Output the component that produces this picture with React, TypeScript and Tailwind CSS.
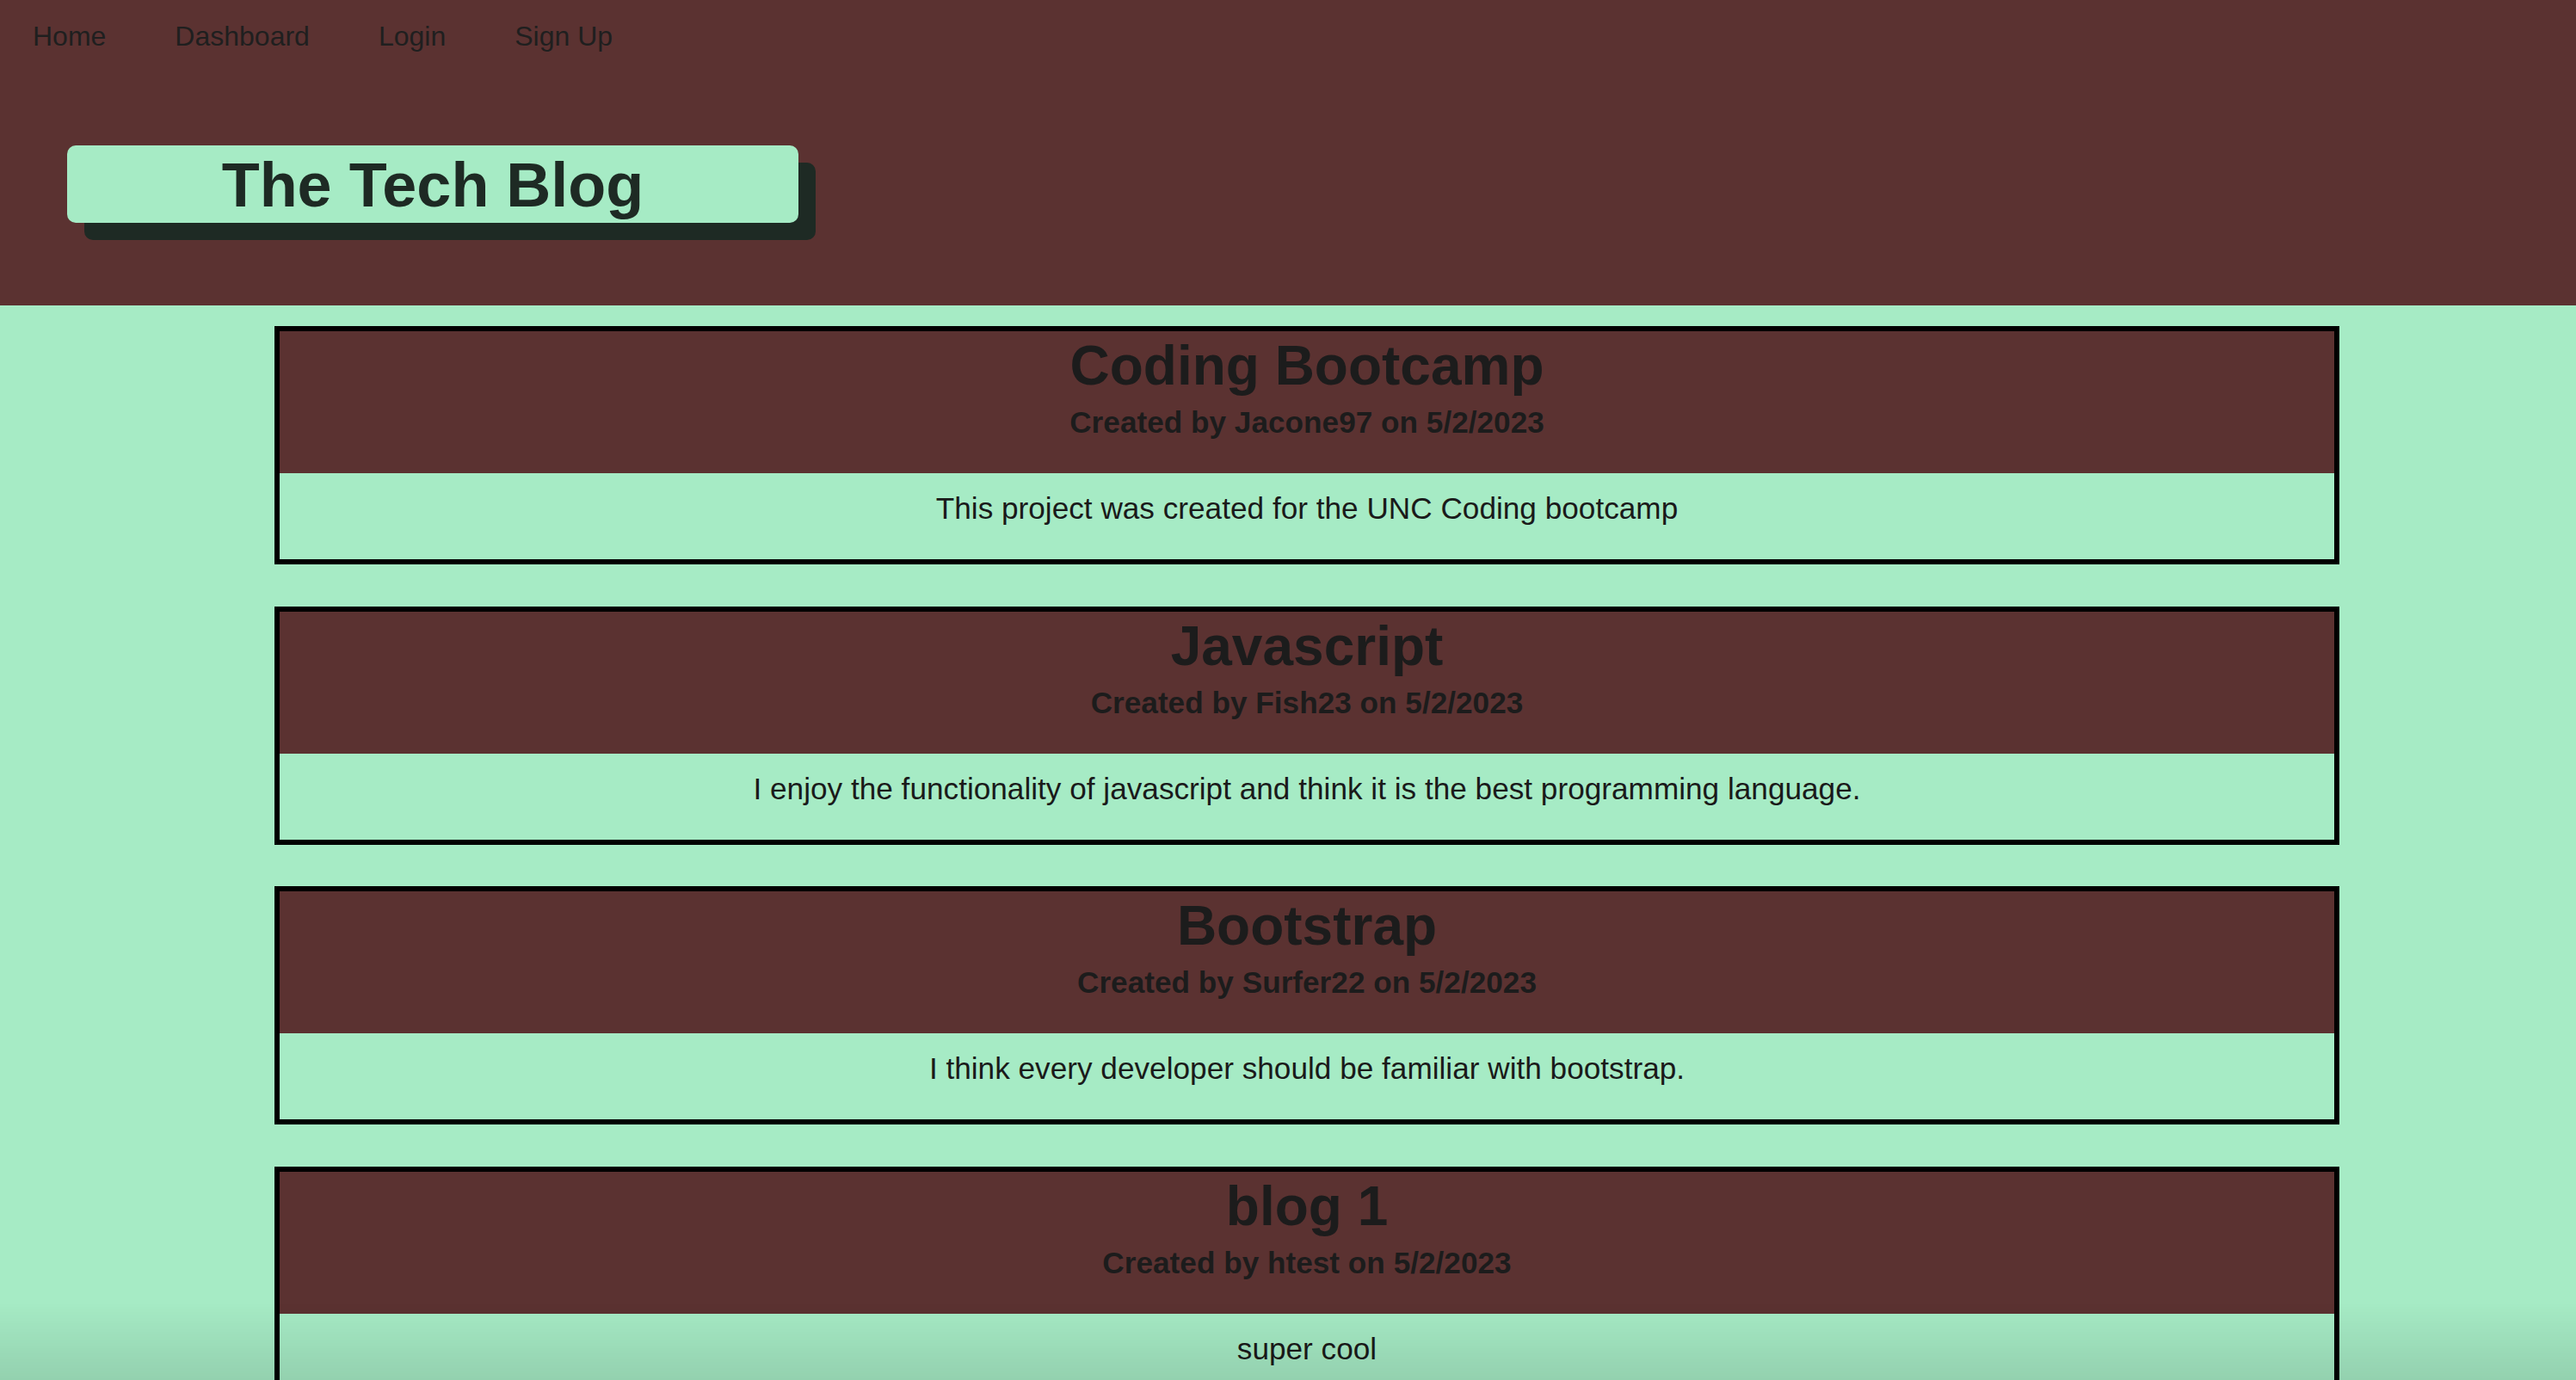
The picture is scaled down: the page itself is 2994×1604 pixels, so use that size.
import React from "react";

const posts = [
  {
    title: "Coding Bootcamp",
    author: "Jacone97",
    date: "5/2/2023",
    body: "This project was created for the UNC Coding bootcamp",
  },
  {
    title: "Javascript",
    author: "Fish23",
    date: "5/2/2023",
    body: "I enjoy the functionality of javascript and think it is the best programming language.",
  },
  {
    title: "Bootstrap",
    author: "Surfer22",
    date: "5/2/2023",
    body: "I think every developer should be familiar with bootstrap.",
  },
  {
    title: "blog 1",
    author: "htest",
    date: "5/2/2023",
    body: "super cool",
  },
];

export default function App() {
  return (
    <div className="min-h-screen bg-[#a6ebc5] font-['Liberation_Sans',Arial,sans-serif]">
      <header className="flex h-[355px] flex-col bg-[#5b3231]">
        <nav className="flex gap-[80px] pl-[38px] pt-[24px] text-[32px] leading-[36px] text-[#1f1f1f]">
          <a>Home</a>
          <a>Dashboard</a>
          <a>Login</a>
          <a>Sign Up</a>
        </nav>
        <div className="ml-[78px] mt-[109px] h-[90px] w-[850px] rounded-[10px] bg-[#a6ebc5] pt-[5px] text-center text-[72px] font-bold leading-[82px] text-[#1e2a24] shadow-[20px_20px_0_#1e2a24]">
          The Tech Blog
        </div>
      </header>
      <main className="flex flex-col gap-[48.7px] pb-[48px] pl-[319px] pt-[24px]">
        {posts.map((p) => (
          <section key={p.title} className="w-[2400px] border-[6px] border-black">
            <div className="flex h-[165px] flex-col items-center bg-[#5b3231] pt-[3px] text-[#1c1c1c]">
              <h1 className="text-[64px] font-bold leading-[74px]">{p.title}</h1>
              <h3 className="mt-[9px] text-[35.2px] font-bold leading-[40px]">
                Created by {p.author} on {p.date}
              </h3>
            </div>
            <div className="h-[100px] pt-[21px] text-center text-[35.2px] leading-[40px] text-[#1a1a1a]">
              {p.body}
            </div>
          </section>
        ))}
      </main>
      <div className="pointer-events-none fixed bottom-0 left-0 right-0 h-[90px] bg-gradient-to-b from-transparent to-[rgba(0,0,0,0.11)]" />
    </div>
  );
}
